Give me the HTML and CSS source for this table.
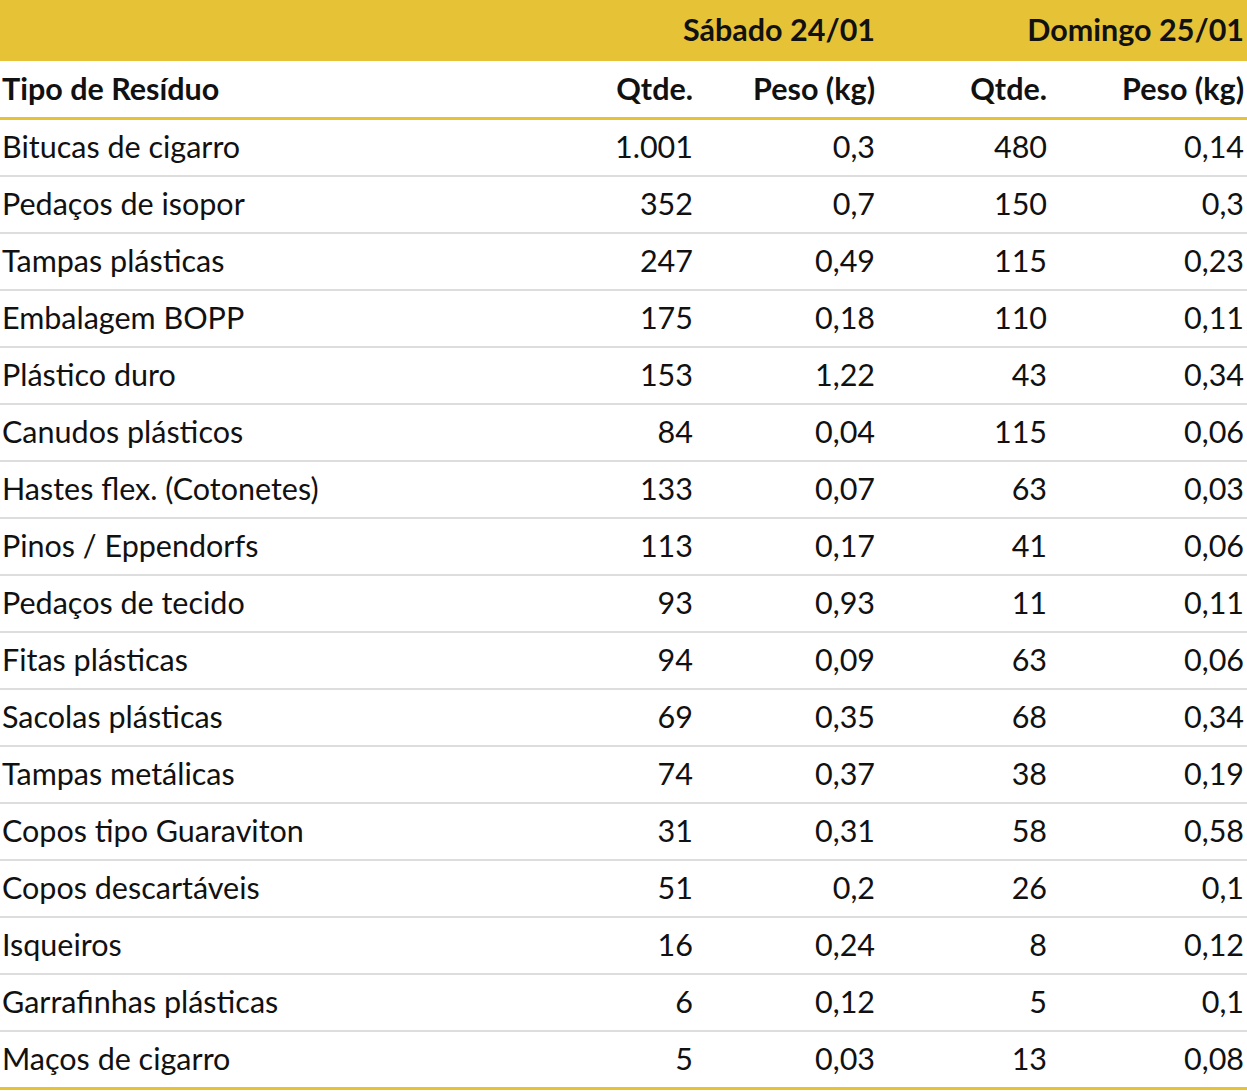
FILE: index.html
```html
<!DOCTYPE html>
<html lang="pt-BR">
<head>
<meta charset="utf-8">
<link rel="stylesheet" href="styles.css">
</head>
<body>
<table class="tbl">
  <colgroup>
    <col class="c-name"><col class="c-q1"><col class="c-p1"><col class="c-q2"><col class="c-p2">
  </colgroup>
  <thead>
    <tr class="group">
      <th></th>
      <th colspan="2" class="num">Sábado 24/01</th>
      <th colspan="2" class="num">Domingo 25/01</th>
    </tr>
    <tr class="heads">
      <th>Tipo de Resíduo</th>
      <th class="num">Qtde.</th>
      <th class="num">Peso (kg)</th>
      <th class="num">Qtde.</th>
      <th class="num">Peso (kg)</th>
    </tr>
  </thead>
  <tbody>
    <tr><td>Bitucas de cigarro</td><td class="num">1.001</td><td class="num">0,3</td><td class="num">480</td><td class="num">0,14</td></tr>
    <tr><td>Pedaços de isopor</td><td class="num">352</td><td class="num">0,7</td><td class="num">150</td><td class="num">0,3</td></tr>
    <tr><td>Tampas plásticas</td><td class="num">247</td><td class="num">0,49</td><td class="num">115</td><td class="num">0,23</td></tr>
    <tr><td>Embalagem BOPP</td><td class="num">175</td><td class="num">0,18</td><td class="num">110</td><td class="num">0,11</td></tr>
    <tr><td>Plástico duro</td><td class="num">153</td><td class="num">1,22</td><td class="num">43</td><td class="num">0,34</td></tr>
    <tr><td>Canudos plásticos</td><td class="num">84</td><td class="num">0,04</td><td class="num">115</td><td class="num">0,06</td></tr>
    <tr><td>Hastes flex. (Cotonetes)</td><td class="num">133</td><td class="num">0,07</td><td class="num">63</td><td class="num">0,03</td></tr>
    <tr><td>Pinos / Eppendorfs</td><td class="num">113</td><td class="num">0,17</td><td class="num">41</td><td class="num">0,06</td></tr>
    <tr><td>Pedaços de tecido</td><td class="num">93</td><td class="num">0,93</td><td class="num">11</td><td class="num">0,11</td></tr>
    <tr><td>Fitas plásticas</td><td class="num">94</td><td class="num">0,09</td><td class="num">63</td><td class="num">0,06</td></tr>
    <tr><td>Sacolas plásticas</td><td class="num">69</td><td class="num">0,35</td><td class="num">68</td><td class="num">0,34</td></tr>
    <tr><td>Tampas metálicas</td><td class="num">74</td><td class="num">0,37</td><td class="num">38</td><td class="num">0,19</td></tr>
    <tr><td>Copos tipo Guaraviton</td><td class="num">31</td><td class="num">0,31</td><td class="num">58</td><td class="num">0,58</td></tr>
    <tr><td>Copos descartáveis</td><td class="num">51</td><td class="num">0,2</td><td class="num">26</td><td class="num">0,1</td></tr>
    <tr><td>Isqueiros</td><td class="num">16</td><td class="num">0,24</td><td class="num">8</td><td class="num">0,12</td></tr>
    <tr><td>Garrafinhas plásticas</td><td class="num">6</td><td class="num">0,12</td><td class="num">5</td><td class="num">0,1</td></tr>
    <tr><td>Maços de cigarro</td><td class="num">5</td><td class="num">0,03</td><td class="num">13</td><td class="num">0,08</td></tr>
  </tbody>
</table>
</body>
</html>
```

FILE: styles.css
```css
html, body {
  margin: 0;
  padding: 0;
  background: #ffffff;
}

.tbl {
  width: 1247px;
  border-collapse: collapse;
  table-layout: fixed;
  font-family: Lato, "Open Sans", sans-serif;
  font-size: 30.5px;
  color: #111111;
}

.c-name { width: 560px; }
.c-q1 { width: 136px; }
.c-p1 { width: 182px; }
.c-q2 { width: 172px; }
.c-p2 { width: 197px; }

.tbl th, .tbl td {
  padding: 0 3px 3px 2px;
  text-align: left;
  white-space: nowrap;
  vertical-align: middle;
}

.tbl .num { text-align: right; }

.tbl th { font-weight: 700; }

.group th {
  background: #e6c236;
  height: 58px;
}

.heads th {
  height: 53px;
  border-bottom: 3px solid #e6c236;
}

.tbl td {
  height: 52px;
  font-weight: 400;
  border-bottom: 2px solid #dddddd;
}

.tbl tbody tr:last-child td {
  border-bottom: 3px solid #e6c236;
}
```
